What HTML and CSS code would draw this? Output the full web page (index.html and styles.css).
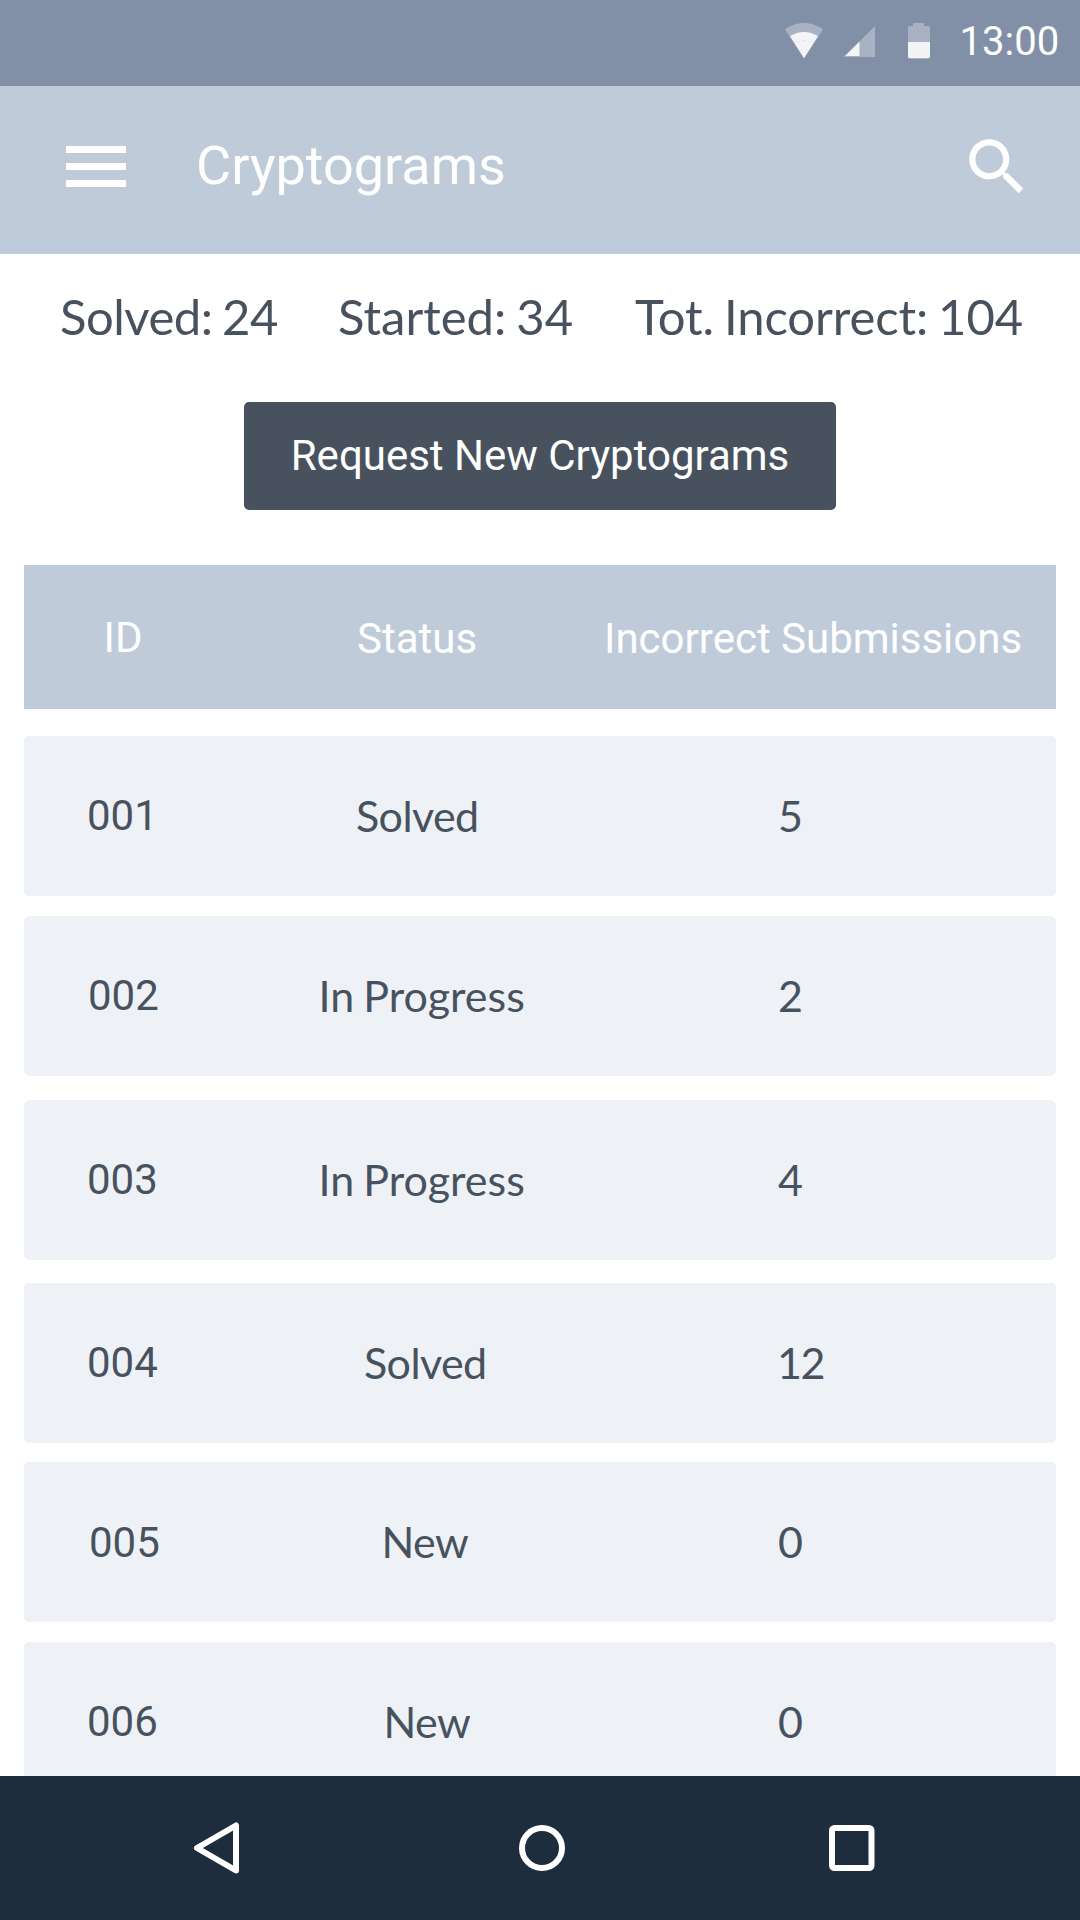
FILE: index.html
```html
<!DOCTYPE html>
<html lang="en">
<head>
<meta charset="utf-8">
<title>Cryptograms</title>
<link rel="stylesheet" href="styles.css">
</head>
<body>
<div class="screen">
  <div class="status-bar">
    <svg class="wifi" width="40" height="38" viewBox="0 0 40 38" fill="#f2f4f6">
      <path opacity=".35" d="M1 7.500C6 3.500 13 1 20 1s14 2.500 19 6.500L20 36.300z"/>
      <path d="M6 14.200C10 11.500 15 10 20 10s10 1.500 14 4.200L20 36.300z"/>
      <path d="M13.500 19.600h2.500M18 18.500h4M24 19.600h2.500M17 27.500h1.500M21.500 27.500h1.500" stroke="#dfe3e8" stroke-width=".8"/>
    </svg>
    <svg class="signal" width="32" height="34" viewBox="0 0 32 34" fill="#f2f4f6">
      <path opacity=".35" d="M31 2v31H0z"/>
      <path d="M15.500 17.500V32H1z"/>
    </svg>
    <svg class="battery" width="22" height="36" viewBox="0 0 22 36" fill="#f2f4f6">
      <path opacity=".35" d="M5 0h11v3h4.500Q22 3 22 4.500V34Q22 36 20 36H2Q0 36 0 34V4.500Q0 3 1.500 3H5z"/>
      <path d="M0 19h22v14.500Q22 35 20.500 35h-19Q0 35 0 33.500z"/>
    </svg>
    <span class="clock">13:00</span>
  </div>

  <header class="app-bar">
    <svg class="menu" width="60" height="41" viewBox="0 0 60 41" fill="#fff">
      <path d="M0 0h60v7H0zM0 17h60v7H0zM0 34h60v7H0z"/>
    </svg>
    <h1 class="title">Cryptograms</h1>
    <svg class="search" width="74" height="74" viewBox="0 0 24 24" fill="#fff">
      <path d="M15.500 14h-.79l-.28-.27C15.410 12.590 16 11.110 16 9.500 16 5.910 13.090 3 9.500 3S3 5.910 3 9.500 5.910 16 9.500 16c1.610 0 3.090-.59 4.230-1.570l.27.28v.79l5 4.990L20.490 19l-4.990-5zm-6 0C7.010 14 5 11.990 5 9.500S7.010 5 9.500 5 14 7.010 14 9.500 11.990 14 9.500 14z"/>
    </svg>
  </header>

  <main class="content">
    <div class="stats">
      <span class="stat-solved">Solved: 24</span>
      <span>Started: 34</span>
      <span class="stat-incorrect">Tot. Incorrect: 104</span>
    </div>
    <button class="request" type="button">Request New Cryptograms</button>

    <div class="row head">
      <span class="id">ID</span>
      <span class="state">Status</span>
      <span class="count">Incorrect Submissions</span>
    </div>
    <div class="list">
      <div class="row card"><span class="id">001</span><span class="state solved">Solved</span><span class="count">5</span></div>
      <div class="row card second"><span class="id">002</span><span class="state progress">In Progress</span><span class="count">2</span></div>
      <div class="row card third"><span class="id">003</span><span class="state progress">In Progress</span><span class="count">4</span></div>
      <div class="row card fourth"><span class="id">004</span><span class="state solved">Solved</span><span class="count">12</span></div>
      <div class="row card fifth"><span class="id">005</span><span class="state new">New</span><span class="count">0</span></div>
      <div class="row card sixth"><span class="id">006</span><span class="state new">New</span><span class="count">0</span></div>
    </div>
  </main>

  <nav class="nav-bar">
    <svg class="back" width="47" height="54" viewBox="0 0 47 54" fill="none" stroke="#fff" stroke-width="6" stroke-linejoin="round">
      <path d="M43 4.500v45L4 27z"/>
    </svg>
    <svg class="home" width="46" height="46" viewBox="0 0 46 46" fill="none" stroke="#fff" stroke-width="6">
      <circle cx="23" cy="23" r="20"/>
    </svg>
    <svg class="recent" width="46" height="46" viewBox="0 0 46 46" fill="none" stroke="#fff" stroke-width="6">
      <rect x="3" y="3" width="39.500" height="40" rx="2.500"/>
    </svg>
  </nav>
</div>
</body>
</html>
```
FILE: styles.css
```css
* { box-sizing: border-box; }

body {
  margin: 0;
  background: #fff;
  font-family: Roboto, sans-serif;
  color: #48525e;
}

svg { display: block; flex: none; }

.screen {
  display: flex;
  flex-direction: column;
  width: 1080px;
  height: 1920px;
  overflow: hidden;
}

.status-bar {
  display: flex;
  flex: none;
  height: 86px;
  padding: 22px 0 0 784px;
  background: #8190a6;
  color: #fff;
}
.signal { margin: 2px 0 0 20px; }
.battery { margin: 1px 0 0 32px; }
.clock {
  margin-left: 29.5px;
  font-size: 40px;
  line-height: 40px;
}

.app-bar {
  display: flex;
  flex: none;
  align-items: center;
  height: 168px;
  padding: 0 46px 7px 66px;
  background: #c0cbda;
  color: #fff;
}
.title {
  flex: 1;
  margin: 0 0 2px 70px;
  font-size: 54px;
  font-weight: 400;
  line-height: 64px;
}

.content {
  flex: 1;
  min-height: 0;
  overflow: hidden;
  padding: 0 24px;
}

.stats {
  display: grid;
  grid-template-columns: 278px 297px auto;
  height: 148px;
  padding: 32px 0 0 36px;
  font-family: Lato, sans-serif;
  font-size: 49px;
  line-height: 60px;
  word-spacing: -2.5px;
  white-space: nowrap;
}
.stat-solved { letter-spacing: -.5px; }
.stat-incorrect { letter-spacing: -.1px; }

.request {
  display: block;
  width: 592px;
  height: 108px;
  margin: 0 auto 55px;
  padding: 0;
  border: 0;
  border-radius: 5px;
  background: #48525e;
  color: #fff;
  font: 400 42px/108px Roboto, sans-serif;
}

.row {
  display: grid;
  grid-template-columns: 250px 300px 1fr;
  align-items: center;
  white-space: nowrap;
  font-size: 42px;
  line-height: 50px;
}

.head {
  height: 144px;
  background: #c0cbda;
  color: #fff;
}
.head .id { padding: 2px 0 0 79.5px; }
.head .state { padding: 4px 0 0 83px; }
.head .count { padding: 4px 0 0 30px; }

.list { padding-top: 27px; }

.card {
  height: 160px;
  border-radius: 5px;
  background: #eef2f7;
}
.card .id { padding-left: 63px; }
.card .state,
.card .count {
  font-family: Lato, sans-serif;
  font-size: 43px;
}
.card .count { padding-left: 204px; }
.card .solved { padding-left: 82px; letter-spacing: -.6px; }
.card .progress { padding-left: 44.5px; word-spacing: -2px; }
.card .new { padding-left: 107.5px; letter-spacing: -.6px; }

.second { margin-top: 20px; }
.second .id { padding-left: 64px; }
.third { margin-top: 24px; }
.fourth { margin-top: 23px; }
.fourth .solved { padding-left: 90px; }
.fourth .count { padding-left: 203px; letter-spacing: -1.5px; }
.fifth { margin-top: 19px; }
.fifth .id { padding: 1px 0 0 65px; }
.sixth { margin-top: 20px; }
.sixth .new { padding-left: 109.5px; }

.nav-bar {
  display: flex;
  flex: none;
  align-items: center;
  height: 144px;
  padding-left: 193px;
  background: #1e2d3d;
}
.home { margin-left: 279px; }
.recent { margin-left: 264px; }
```
